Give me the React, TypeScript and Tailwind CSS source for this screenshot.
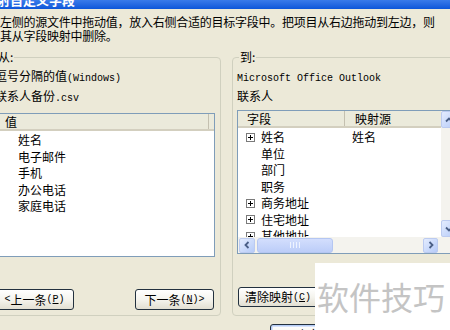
import React from "react";

const M = ({ children }: { children: React.ReactNode }) => (
  <span className="font-['Liberation_Mono',monospace] text-[10px]">{children}</span>
);

const Key = ({ k }: { k: string }) => (
  <M>
    (<span className="underline underline-offset-1">{k}</span>)
  </M>
);

function PlusBox() {
  return (
    <svg width="9" height="9" viewBox="0 0 9 9" className="shrink-0">
      <rect x="0.5" y="0.5" width="8" height="8" fill="#fff" stroke="#7a7a7a" />
      <path d="M2 4.5h5M4.5 2v5" stroke="#000" />
    </svg>
  );
}

const arrows = {
  up: "M2 6.5l3-3 3 3",
  down: "M2 3.5l3 3 3-3",
  left: "M6.5 2l-3 3 3 3",
  right: "M3.5 2l3 3-3 3",
};

function ArrowBtn({ dir, className = "" }: { dir: keyof typeof arrows; className?: string }) {
  return (
    <div
      className={`shrink-0 rounded-[2px] border border-[#bccbf0] bg-linear-to-br from-[#e4ecfe] to-[#b6cbf8] flex items-center justify-center ${className}`}
    >
      <svg width="10" height="10" viewBox="0 0 10 10">
        <path d={arrows[dir]} fill="none" stroke="#4a5f86" strokeWidth="1.8" />
      </svg>
    </div>
  );
}

function Btn({ children, className = "" }: { children: React.ReactNode; className?: string }) {
  return (
    <div
      className={`rounded-[3px] border border-[#23313f] bg-linear-to-b from-white via-[#f5f4ee] to-[#e2dfd2] flex items-center justify-center text-[12px] whitespace-nowrap ${className}`}
    >
      {children}
    </div>
  );
}

const leftItems = ["姓名", "电子邮件", "手机", "办公电话", "家庭电话"];

const rightItems = [
  { name: "姓名", plus: true, map: "姓名" },
  { name: "单位", plus: false, map: "" },
  { name: "部门", plus: false, map: "" },
  { name: "职务", plus: false, map: "" },
  { name: "商务地址", plus: true, map: "" },
  { name: "住宅地址", plus: true, map: "" },
  { name: "其他地址", plus: true, map: "" },
];

export default function App() {
  return (
    <div className="w-[450px] h-[330px] overflow-hidden relative bg-[#ece9d8] text-black font-['Noto_Sans_CJK_SC',sans-serif]">
      {/* title bar, mostly cut off */}
      <div className="h-[9px] overflow-hidden bg-linear-to-b from-[#3a7bea] to-[#0c56d9]">
        <div className="-mt-[8px] -ml-[16px] text-[13px] leading-[16px] font-bold text-white whitespace-nowrap">
          映射自定义字段
        </div>
      </div>

      <div className="-ml-[10px] w-[480px]">
        <div className="pl-[10px] mt-[6px] text-[12px] tracking-[-0.25px] leading-[14px] whitespace-nowrap">
          <div>左侧的源文件中拖动值，放入右侧合适的目标字段中。把项目从右边拖动到左边，则</div>
          <div>其从字段映射中删除。</div>
        </div>

        <div className="flex gap-[11px] mt-[7px]">
          {/* from */}
          <fieldset className="w-[231px] shrink-0 border border-[#d0d0bf] rounded-[4px] px-[4px] pb-[5px]">
            <legend className="ml-[2px] px-[1px] text-[12px] leading-[14px]">从:</legend>
            <div className="pt-[3px] text-[12px] leading-[17px] whitespace-nowrap">
              <div>
                逗号分隔的值<M>(Windows)</M>
              </div>
              <div>
                联系人备份<M>.csv</M>
              </div>
            </div>
            <div className="mt-[6px] w-[220px] h-[144px] border border-[#7f9db9] bg-white text-[12px]">
              <div className="h-[17px] flex bg-[#ebeadb] border-b-2 border-[#d3cfbf]">
                <div className="w-[213px] border-r border-[#c4c0b0] pl-[9px] leading-[15px]">值</div>
              </div>
              <div className="pt-[1px]">
                {leftItems.map((it) => (
                  <div key={it} className="h-[16.5px] leading-[16.5px] pl-[22px]">
                    {it}
                  </div>
                ))}
              </div>
            </div>
            <div className="mt-[32px] w-[220px] flex justify-between">
              <Btn className="w-[79px] h-[21px]">
                <M>&lt;</M>上一条<Key k="P" />
              </Btn>
              <Btn className="w-[79px] h-[21px] mr-[1px]">
                下一条<Key k="N" />
                <M>&gt;</M>
              </Btn>
            </div>
          </fieldset>

          {/* to */}
          <fieldset className="w-[240px] shrink-0 border border-[#d0d0bf] rounded-[4px] px-[4px] pb-[5px]">
            <legend className="ml-[2px] px-[1px] text-[12px] leading-[14px]">到:</legend>
            <div className="pt-[3px] text-[12px] leading-[17px] whitespace-nowrap">
              <div>
                <M>Microsoft Office Outlook</M>
              </div>
              <div>联系人</div>
            </div>
            <div className="mt-[6px] w-[222px] h-[144px] border border-[#7f9db9] bg-white text-[12px] flex flex-col">
              <div className="flex h-[126px]">
                <div className="w-[203px] flex flex-col overflow-hidden">
                  <div className="h-[17px] shrink-0 flex bg-[#ebeadb] border-b-2 border-[#d3cfbf] leading-[15px]">
                    <div className="w-[107px] border-r border-[#c4c0b0] pl-[9px]">字段</div>
                    <div className="flex-1 pl-[10px]">映射源</div>
                  </div>
                  <div className="pt-[1px] flex-1 overflow-hidden">
                    {rightItems.map((it) => (
                      <div key={it.name} className="h-[16.5px] flex items-center">
                        <div className="w-[107px] pl-[8px] flex items-center gap-[6px]">
                          {it.plus ? <PlusBox /> : <span className="w-[9px] shrink-0" />}
                          <span className="leading-[16.5px]">{it.name}</span>
                        </div>
                        <div className="pl-[7px] leading-[16.5px]">{it.map}</div>
                      </div>
                    ))}
                  </div>
                </div>
                <div className="w-[17px] flex flex-col bg-[#f4f3ee]">
                  <ArrowBtn dir="up" className="h-[17px] w-[16px]" />
                  <div className="flex-1" />
                  <ArrowBtn dir="down" className="h-[17px] w-[16px]" />
                </div>
              </div>
              <div className="flex h-[16px]">
                <div className="w-[203px] flex items-center bg-[#f4f3ee]">
                  <ArrowBtn dir="left" className="ml-[1px] w-[16px] h-[15px]" />
                  <div className="ml-[2px] w-[76px] h-[15px] rounded-[3px] border border-[#b4c6f2] bg-linear-to-b from-[#d3defd] to-[#bccdf8] flex items-center justify-center gap-[2px]">
                    <span className="w-[1px] h-[6px] bg-[#eef3ff]" />
                    <span className="w-[1px] h-[6px] bg-[#eef3ff]" />
                    <span className="w-[1px] h-[6px] bg-[#eef3ff]" />
                    <span className="w-[1px] h-[6px] bg-[#eef3ff]" />
                  </div>
                  <div className="flex-1" />
                  <ArrowBtn dir="right" className="mr-[3px] w-[15px] h-[15px]" />
                </div>
                <div className="w-[17px] bg-[#f4f3ee]" />
              </div>
            </div>
            <div className="mt-[33px] flex">
              <Btn className="ml-[1px] w-[80px] h-[20px]">
                清除映射<Key k="C" />
              </Btn>
            </div>
          </fieldset>
        </div>

        <div className="mt-[8px] flex">
          <Btn className="ml-[280px] w-[75px] h-[21px] shadow-[inset_0_0_0_1px_#b5ccf5,inset_0_0_0_2px_#d6e2fb]">确定</Btn>
        </div>
      </div>

      {/* watermark */}
      <div className="absolute left-[315px] top-[263px] right-0 bottom-0 bg-white">
        <div className="pl-[2px] pt-[17px] text-[32px] leading-[32px] text-[#c4c4c4] whitespace-nowrap">
          软件技巧
        </div>
      </div>
    </div>
  );
}
